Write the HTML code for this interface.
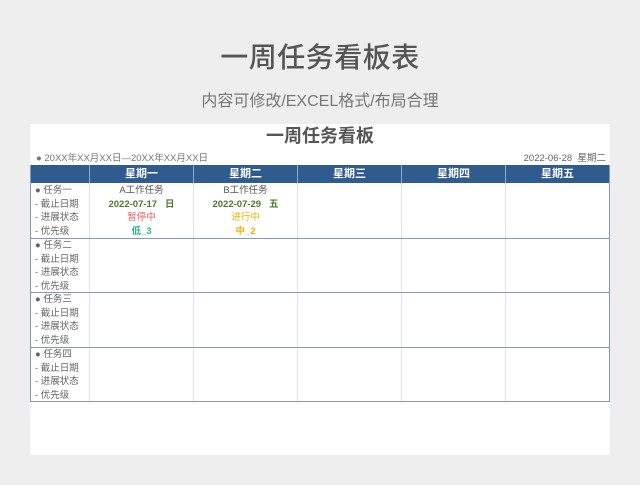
<!DOCTYPE html>
<html><head><meta charset="utf-8"><style>
*{margin:0;padding:0;box-sizing:border-box}
body{width:640px;height:485px;background:#eeeeee;font-family:"Liberation Sans","Noto Sans CJK SC",sans-serif;position:relative;overflow:hidden}
.a{position:absolute;white-space:nowrap}
.panel{position:absolute;left:30px;top:124px;width:580px;height:331px;background:#fff}
.hd{position:absolute;top:165px;height:18px;background:#2f5b8f;color:#fff;font-size:11px;font-weight:bold;text-align:center;line-height:18px}
.vl{position:absolute;width:1px;background:#e2e2e2}
.hl{position:absolute;left:30px;width:580px;height:1px;background:#7f9cc4}
.lab{position:absolute;left:35px;font-size:9.5px;color:#666;line-height:13.6px}
.c{position:absolute;font-size:9.5px;text-align:center;line-height:13.6px}
</style></head><body>
<div class="a" style="left:0;width:640px;text-align:center;top:36px;font-size:28px;color:#555;font-weight:500;letter-spacing:0.5px">一周任务看板表</div>
<div class="a" style="left:0;width:640px;text-align:center;top:87px;font-size:16px;color:#777">内容可修改/EXCEL格式/布局合理</div>
<div class="panel"></div>
<div class="a" style="left:30px;width:580px;text-align:center;top:122px;font-size:18px;font-weight:bold;color:#555">一周任务看板</div>
<div class="a" style="left:36px;top:150px;font-size:9.5px;color:#777">● 20XX年XX月XX日—20XX年XX月XX日</div>
<div class="a" style="right:34px;top:150px;font-size:9.5px;color:#666">2022-06-28&nbsp;&nbsp;星期二</div>
<div class="hd" style="left:30px;width:580px"></div>
<div class="hd" style="left:90px;width:103px">星期一</div>
<div class="hd" style="left:194px;width:103px">星期二</div>
<div class="hd" style="left:298px;width:103px">星期三</div>
<div class="hd" style="left:402px;width:103px">星期四</div>
<div class="hd" style="left:506px;width:103px">星期五</div>
<div class="vl" style="left:89px;top:165px;height:18px;background:#8fa8c8"></div>
<div class="vl" style="left:193px;top:165px;height:18px;background:#8fa8c8"></div>
<div class="vl" style="left:297px;top:165px;height:18px;background:#8fa8c8"></div>
<div class="vl" style="left:401px;top:165px;height:18px;background:#8fa8c8"></div>
<div class="vl" style="left:505px;top:165px;height:18px;background:#8fa8c8"></div>
<div class="vl" style="left:89px;top:183px;height:219px"></div>
<div class="vl" style="left:193px;top:183px;height:219px"></div>
<div class="vl" style="left:297px;top:183px;height:219px"></div>
<div class="vl" style="left:401px;top:183px;height:219px"></div>
<div class="vl" style="left:505px;top:183px;height:219px"></div>
<div class="vl" style="left:30px;top:165px;height:237px;background:#7f9cc4"></div>
<div class="vl" style="left:609px;top:165px;height:237px;background:#7f9cc4"></div>
<div class="hl" style="top:238px"></div>
<div class="hl" style="top:292px"></div>
<div class="hl" style="top:347px"></div>
<div class="hl" style="top:401px"></div>
<div class="lab" style="top:184px">● 任务一<br>- 截止日期<br>- 进展状态<br>- 优先级</div>
<div class="lab" style="top:239px">● 任务二<br>- 截止日期<br>- 进展状态<br>- 优先级</div>
<div class="lab" style="top:293px">● 任务三<br>- 截止日期<br>- 进展状态<br>- 优先级</div>
<div class="lab" style="top:348px">● 任务四<br>- 截止日期<br>- 进展状态<br>- 优先级</div>
<div class="c" style="left:90px;width:103px;top:184px"><span style="color:#555">A工作任务</span><br><b style="color:#4a7a2a">2022-07-17&nbsp;&nbsp;&nbsp;日</b><br><span style="color:#f06060">暂停中</span><br><b style="color:#2cb88a">低_3</b></div>
<div class="c" style="left:194px;width:103px;top:184px"><span style="color:#555">B工作任务</span><br><b style="color:#4a7a2a">2022-07-29&nbsp;&nbsp;&nbsp;五</b><br><span style="color:#f0b400">进行中</span><br><b style="color:#f0b400">中_2</b></div>
</body></html>
